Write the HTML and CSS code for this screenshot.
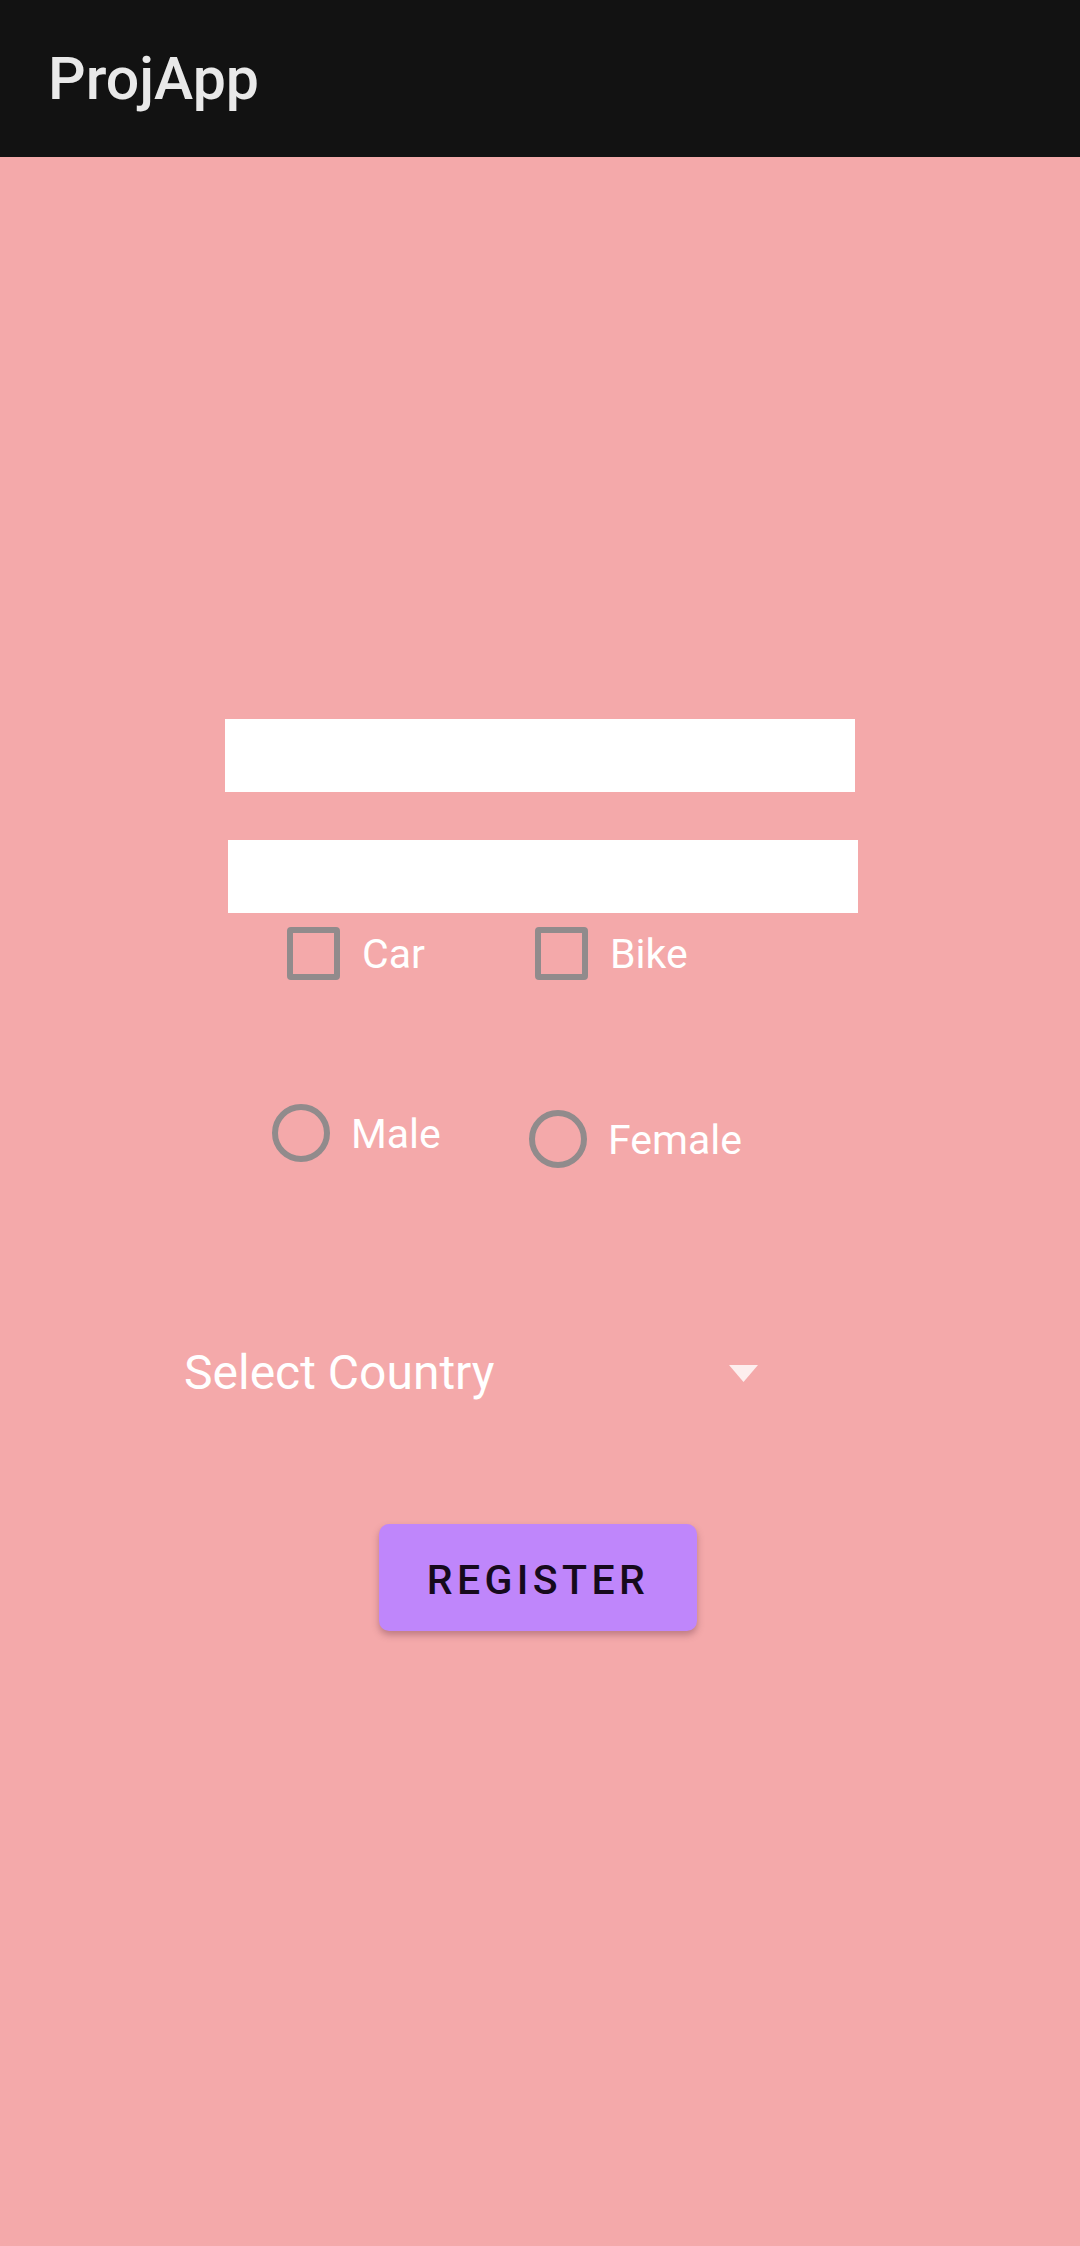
FILE: index.html
```html
<!DOCTYPE html>
<html>
<head>
<meta charset="utf-8">
<title>ProjApp</title>
<link rel="stylesheet" href="styles.css">
</head>
<body>
<header class="appbar"><span class="title">ProjApp</span></header>
<main class="form">
  <input class="field field-one" type="text" aria-label="Name">
  <input class="field field-two" type="text" aria-label="Email">
  <div class="check-row">
    <label class="check-item check-car"><span class="box"></span><span class="label">Car</span></label>
    <label class="check-item"><span class="box"></span><span class="label">Bike</span></label>
  </div>
  <div class="radio-row">
    <label class="radio-item radio-male"><span class="circle"></span><span class="label">Male</span></label>
    <label class="radio-item radio-female"><span class="circle"></span><span class="label">Female</span></label>
  </div>
  <div class="spinner">
    <span class="spinner-text">Select Country</span>
    <svg class="arrow" width="29" height="17" viewBox="0 0 29 17"><polygon points="0,0 29,0 14.5,17" fill="#ffffff" fill-opacity="0.8"/></svg>
  </div>
  <div class="button-row">
    <button class="register" type="button">REGISTER</button>
  </div>
</main>
</body>
</html>
```

FILE: styles.css
```css
html, body {
  margin: 0;
  padding: 0;
}
body {
  background: #f4a9aa;
  font-family: Roboto, "Noto Sans", "Liberation Sans", sans-serif;
  width: 1080px;
  min-height: 2246px;
}
.appbar {
  height: 157px;
  background: #121212;
  display: flex;
  align-items: center;
  padding-left: 48px;
  box-sizing: border-box;
}
.title {
  color: #e9e9e9;
  font-size: 59px;
  font-weight: 500;
}
.form {
  display: flex;
  flex-direction: column;
  align-items: flex-start;
}
.field {
  display: block;
  border: 0;
  padding: 0;
  outline: none;
  background: #ffffff;
  width: 630px;
  height: 73px;
}
.field-one {
  margin: 562px 0 0 225px;
}
.field-two {
  margin: 48px 0 0 228px;
}
.check-row {
  display: flex;
  margin: 14px 0 0 287px;
}
.check-item {
  display: flex;
  align-items: center;
  height: 53px;
}
.check-car {
  width: 248px;
}
.box {
  width: 53px;
  height: 53px;
  box-sizing: border-box;
  border: 6px solid #918b8c;
  border-radius: 4px;
}
.label {
  color: #ffffff;
  font-size: 41px;
  line-height: 53px;
  margin-left: 22px;
  padding-top: 2px;
}
.radio-row {
  display: flex;
  align-items: flex-start;
  margin: 124px 0 0 272px;
}
.radio-item {
  display: flex;
  align-items: center;
  height: 58px;
}
.radio-male {
  width: 257px;
}
.radio-female {
  margin-top: 6px;
}
.circle {
  width: 58px;
  height: 58px;
  box-sizing: border-box;
  border: 6px solid #918b8c;
  border-radius: 50%;
}
.radio-item .label {
  margin-left: 21px;
}
.spinner {
  display: flex;
  align-items: center;
  justify-content: space-between;
  width: 574px;
  margin: 177px 0 0 184px;
  height: 56px;
}
.spinner-text {
  color: #ffffff;
  font-size: 48px;
  line-height: 56px;
}
.arrow {
  display: block;
}
.button-row {
  display: flex;
  margin: 123px 0 0 379px;
}
.register {
  width: 318px;
  height: 107px;
  border: 0;
  border-radius: 10px;
  background: #bf86fb;
  color: #160a1c;
  font-family: Roboto, "Noto Sans", sans-serif;
  font-size: 41px;
  font-weight: 500;
  letter-spacing: 4.4px;
  padding: 4px 0 0 0;
  box-shadow: 0 4px 7px rgba(90, 40, 60, 0.35);
  display: flex;
  align-items: center;
  justify-content: center;
}
```
